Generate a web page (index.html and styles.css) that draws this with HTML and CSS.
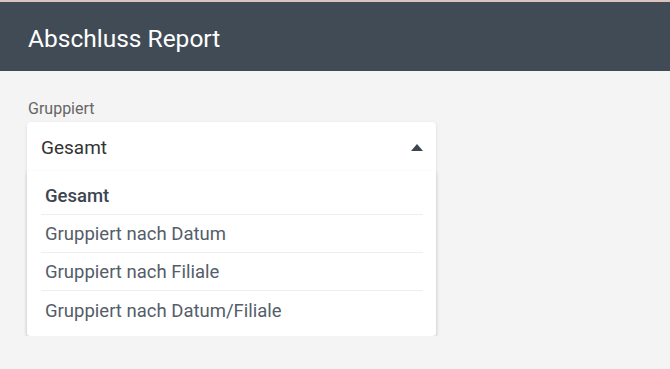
FILE: index.html
```html
<!DOCTYPE html>
<html lang="de">
<head>
  <meta charset="UTF-8" />
  <meta name="viewport" content="width=device-width, initial-scale=1.0" />
  <title>Abschluss Report</title>
  <link rel="stylesheet" href="styles.css">
</head>
<body>
  <header class="topbar">
    <h1>Abschluss Report</h1>
  </header>

  <main class="content">
    <label class="field-label">Gruppiert</label>
    <div class="select">
      <div class="select-value">
        <span>Gesamt</span>
        <span class="caret"></span>
      </div>
      <ul class="options">
        <li class="option selected">Gesamt</li>
        <li class="option">Gruppiert nach Datum</li>
        <li class="option">Gruppiert nach Filiale</li>
        <li class="option">Gruppiert nach Datum/Filiale</li>
      </ul>
    </div>
  </main>
</body>
</html>
```

FILE: styles.css
```css
body {
  margin: 0;
  padding: 0;
  background-color: #f4f4f4;
  font-family: Roboto, "Liberation Sans", sans-serif;
  color: #333;
}

.topbar {
  background-color: #414b55;
  border-top: 2px solid #dcc3bb;
  box-sizing: border-box;
  height: 71px;
  display: flex;
  align-items: center;
  padding: 3px 28px 0;
}

.topbar h1 {
  margin: 0;
  font-size: 24.5px;
  font-weight: 400;
  color: #ffffff;
}

.content {
  padding: 28px 27px 0;
  width: 409px;
}

.field-label {
  display: block;
  font-size: 16px;
  color: #666;
  margin: 0 0 4px 1px;
  line-height: 19px;
}

.select {
  background: #fff;
  border-radius: 4px;
  box-shadow: 0 1px 3px rgba(0, 0, 0, 0.12);
}

.select-value {
  height: 48px;
  display: flex;
  align-items: center;
  justify-content: space-between;
  padding: 1px 13px 0 14px;
  font-size: 19px;
  color: #333;
}

.caret {
  width: 0;
  height: 0;
  border-left: 6px solid transparent;
  border-right: 6px solid transparent;
  border-bottom: 7px solid #3c4550;
}

.options {
  list-style: none;
  margin: 0;
  padding: 6px 13px 7px 14px;
  box-shadow: 0 2px 4px rgba(0, 0, 0, 0.14);
}

.option {
  height: 37px;
  display: flex;
  align-items: center;
  padding-left: 4px;
  font-size: 18.5px;
  color: #545d69;
  border-bottom: 1px solid #eeeeee;
}

.option:last-child {
  border-bottom: none;
  height: 38px;
  padding-top: 1px;
  box-sizing: border-box;
}

.option.selected {
  font-weight: 500;
  color: #3c4550;
}
```
